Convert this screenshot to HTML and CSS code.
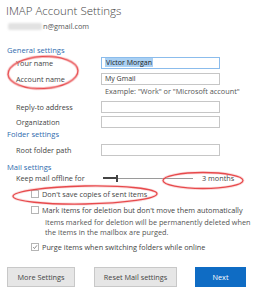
FILE: index.html
```html
<!DOCTYPE html>
<html>
<head>
<meta charset="utf-8">
<link rel="stylesheet" href="styles.css">
</head>
<body>
<div class="page">
  <header class="head">
    <div class="title">IMAP Account Settings</div>
    <div class="email"><span class="blur"></span>n@gmail.com</div>
  </header>

  <div class="section">General settings</div>
  <div class="row r-name">
    <label>Your name</label>
    <div class="input focus"><span class="sel">Victor Morgan</span></div>
  </div>
  <div class="row r-acct">
    <label>Account name</label>
    <div class="input">My Gmail</div>
  </div>
  <div class="hint">Example: "Work" or "Microsoft account"</div>
  <div class="row r-reply">
    <label>Reply-to address</label>
    <div class="input"></div>
  </div>
  <div class="row r-org">
    <label>Organization</label>
    <div class="input"></div>
  </div>

  <div class="section s-folder">Folder settings</div>
  <div class="row r-root">
    <label>Root folder path</label>
    <div class="input"></div>
  </div>

  <div class="section s-mail">Mail settings</div>
  <div class="row r-keep">
    <label>Keep mail offline for</label>
    <div class="slider"><span class="tick"></span><span class="thumb"></span></div>
    <span class="months">3 months</span>
  </div>

  <div class="check c-save"><span class="box"></span>Don't save copies of sent items</div>
  <div class="check c-mark"><span class="box"></span>Mark items for deletion but don't move them automatically</div>
  <div class="note">Items marked for deletion will be permanently deleted when the items in the mailbox are purged.</div>
  <div class="check c-purge"><span class="box checked"><svg viewBox="0 0 8 8" width="8" height="8"><path d="M1.5 4.2 L3.3 6 L6.6 1.8" fill="none" stroke="#555" stroke-width="0.9"/></svg></span>Purge items when switching folders while online</div>

  <div class="buttons">
    <button class="btn b-more">More Settings</button>
    <button class="btn b-reset">Reset Mail settings</button>
    <button class="btn primary">Next</button>
  </div>

  <svg class="marks" width="263" height="296" viewBox="0 0 263 296">
    <g fill="none" stroke="#f3a0a2" stroke-width="3" opacity="0.35">
      <ellipse cx="43" cy="72.5" rx="35" ry="16" transform="rotate(-3 43 72.5)"/>
      <ellipse cx="203" cy="180.5" rx="40" ry="8"/>
      <ellipse cx="85" cy="195" rx="72" ry="9" transform="rotate(-1 85 195)"/>
    </g>
    <g fill="none" stroke="#e5393c" stroke-width="1.3" opacity="0.9">
      <ellipse cx="43" cy="72.5" rx="35" ry="16" transform="rotate(-3 43 72.5)"/>
      <ellipse cx="203" cy="180.5" rx="40" ry="8"/>
      <ellipse cx="85" cy="195" rx="72" ry="9" transform="rotate(-1 85 195)"/>
    </g>
  </svg>
</div>
</body>
</html>
```

FILE: styles.css
```css
* { box-sizing: border-box; }
html, body { margin: 0; padding: 0; background: #fff; }
body {
  font-family: "Open Sans", "Noto Sans", sans-serif;
  font-size: 7.3px;
  color: #444;
  width: 263px;
  height: 296px;
  overflow: hidden;
}
.page { position: relative; width: 263px; height: 296px; }
.head { padding: 4px 6px 0 6px; height: 44px; }
.title { font-size: 11.5px; line-height: 14px; color: #444; font-weight: 300; }
.email { font-size: 7.3px; line-height: 10px; margin-top: 3px; padding-left: 2px; display: flex; align-items: center; color: #555; }
.blur { display: inline-block; width: 34px; height: 7px; background: #e2e2e2; border-radius: 2px; filter: blur(0.8px); margin-right: 1px; }

.section { color: #2f6cae; font-size: 7.6px; line-height: 12px; padding-left: 7px; }
.row { display: grid; grid-template-columns: 101px 119px; align-items: center; }
.row label { padding-left: 16px; line-height: 12px; }
.input { height: 12px; border: 1px solid #c6c6c6; background: #fff; padding: 0 3px; line-height: 10px; font-size: 7px; color: #333; }
.input.focus { border-color: #8bbcec; }
.sel { background: #a9d0f3; color: #222; padding: 0 1px; }

.r-name { margin-top: 1px; }
.r-acct { margin-top: 4px; }
.hint { padding-left: 105px; line-height: 10px; margin-top: 1px; color: #555; }
.r-reply { margin-top: 5px; }
.r-org { margin-top: 3px; }
.r-root { margin-top: 4px; }
.s-mail { margin-top: 5px; }
.r-keep { display: flex; height: 10px; }
.r-keep label { width: 103px; flex: none; }
.slider { position: relative; width: 90px; height: 1px; background: #9a9a9a; }
.tick { position: absolute; left: 0; top: -0.5px; width: 14px; height: 2px; background: #444; }
.thumb { position: absolute; left: 13px; top: -3px; width: 1.5px; height: 7px; background: #444; }
.months { margin-left: 9px; color: #444; }

.check { display: flex; align-items: center; padding-left: 31px; line-height: 10px; }
.box { width: 8px; height: 8px; border: 1px solid #b5b5b5; background: #fff; margin-right: 3px; flex: none; display: flex; align-items: center; justify-content: center; }
.box svg { display: block; }
.c-save { margin-top: 6px; }
.c-mark { margin-top: 6px; }
.note { padding-left: 45px; padding-right: 12px; line-height: 10px; margin-top: 2px; color: #555; }
.c-purge { margin-top: 5px; }

.buttons { display: flex; padding-left: 7px; margin-top: 15px; }
.btn { font-family: inherit; font-size: 7.3px; height: 20px; border: 1px solid #c8c8c8; background: #e6e6e6; color: #444; padding: 0; }
.b-more { width: 68px; }
.b-reset { width: 83px; margin-left: 19px; }
.primary { width: 51px; margin-left: 18px; background: #0f6cc4; border-color: #0f6cc4; color: #fff; }

.marks { position: absolute; left: 0; top: 0; pointer-events: none; }
```
